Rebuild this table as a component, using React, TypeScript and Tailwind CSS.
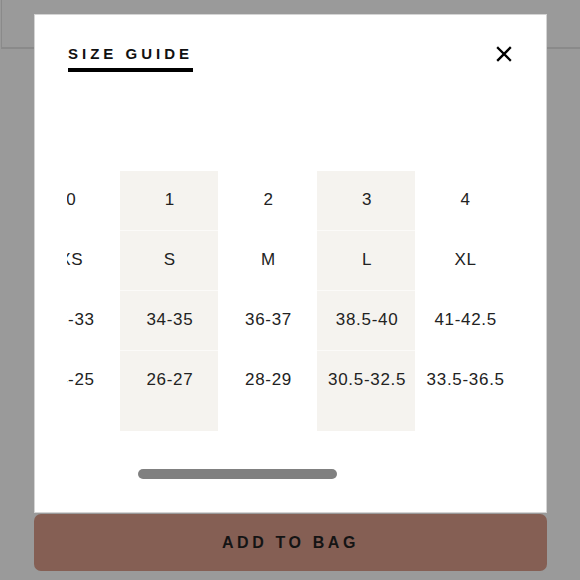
const sizes = [
  { label: "0", fit: "XS", bust: "32-33", waist: "24-25" },
  { label: "1", fit: "S", bust: "34-35", waist: "26-27" },
  { label: "2", fit: "M", bust: "36-37", waist: "28-29" },
  { label: "3", fit: "L", bust: "38.5-40", waist: "30.5-32.5" },
  { label: "4", fit: "XL", bust: "41-42.5", waist: "33.5-36.5" },
];

export default function App() {
  return (
    <div className="relative h-[580px] w-[580px] overflow-hidden bg-[#9a9a9a] font-['Liberation_Sans',Arial,sans-serif]">
      {/* page behind the overlay */}
      <div className="ml-px h-[49px] border-b-2 border-l border-[#8a8a8a]" />

      {/* size guide sheet */}
      <div className="absolute left-[34px] top-[14px] w-[513px]">
        <div className="h-[499px] border border-[#d4d4d4] bg-white px-[32px] pt-[31px]">
          <div className="flex items-start justify-between">
            <h2 className="ml-px border-b-[4px] border-black pb-[6px] text-[15px] font-bold leading-[16px] tracking-[4px] text-[#111]">
              SIZE GUIDE
            </h2>
            <button className="mr-[2px] text-black" aria-label="Close">
              <svg width="16" height="16" viewBox="0 0 16 16" fill="none" stroke="currentColor" strokeWidth="2.3" strokeLinecap="square">
                <path d="M2 2 L14 14 M14 2 L2 14" />
              </svg>
            </button>
          </div>

          {/* size table, scrolled to its right end */}
          <div className="mt-[99px] overflow-hidden">
            <div className="-ml-[46px] flex w-[493px]">
              {sizes.map((s, i) => {
                const shaded = i % 2 === 1;
                return (
                  <div
                    key={s.label}
                    className={`flex-1 pb-[20px] text-[17px] tracking-[0.7px] text-[#222] ${shaded ? "bg-[#f5f3ef]" : "bg-white"}`}
                  >
                    {[s.label, s.fit, s.bust, s.waist].map((v, j) => (
                      <div
                        key={j}
                        className={`flex h-[60px] items-center justify-center whitespace-nowrap pb-[2px] pl-[2px] ${j < 3 && shaded ? "border-b border-[#fbfaf8]" : ""}`}
                      >
                        {v}
                      </div>
                    ))}
                  </div>
                );
              })}
            </div>
          </div>

          {/* scroll indicator */}
          <div className="mt-[38px] h-[10px]">
            <div className="ml-[71px] h-[10px] w-[199px] rounded-full bg-[#808080]" />
          </div>
        </div>

        <button className="mt-px flex h-[57px] w-full items-center justify-center rounded-[7px] bg-[#855f54] text-[16px] font-bold tracking-[3.6px] text-[#141414]">
          ADD TO BAG
        </button>
      </div>
    </div>
  );
}
